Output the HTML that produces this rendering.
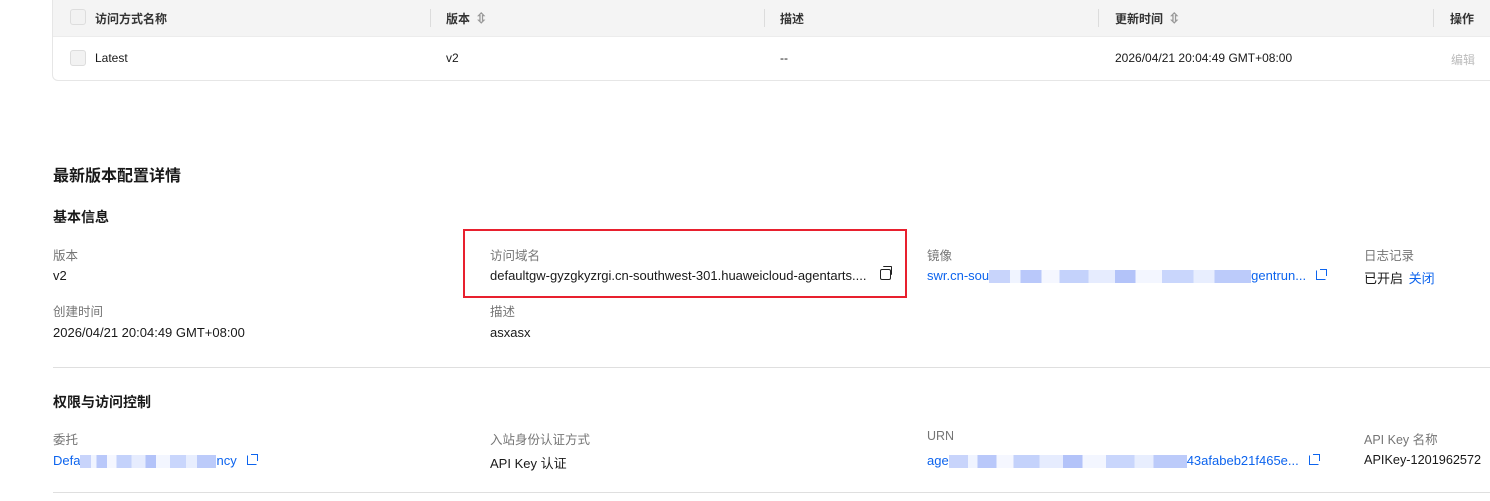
<!DOCTYPE html>
<html><head><meta charset="utf-8"><style>
body{margin:0;width:1490px;height:501px;background:#fff;font-family:"Liberation Sans","Noto Sans CJK SC",sans-serif;font-size:13px;color:#191919;position:relative;overflow:hidden}
.a{position:absolute;white-space:nowrap}
.lbl{color:#757575;font-size:12.5px}
.link{color:#0d64ee}
.cb{position:absolute;width:14px;height:14px;border:1px solid #ddd;border-radius:3px;background:#f2f2f2}
.sep{position:absolute;width:1px;height:18px;background:#dcdcdc;top:9px}
.blur{display:inline-block;height:13px;vertical-align:middle;background:linear-gradient(90deg,#c8d4fb 0 8%,#f0f4ff 8% 12%,#b9c8fa 12% 20%,#f5f7ff 20% 27%,#c4d2fb 27% 38%,#e6ecfe 38% 48%,#b3c3f9 48% 56%,#f3f6ff 56% 66%,#c9d6fc 66% 78%,#e8eefe 78% 86%,#bccbfa 86%)}
.ext{display:inline-block;width:8px;height:8px;border:1.3px solid #0d64ee;border-top-color:transparent;border-right-color:transparent;margin-left:10px;vertical-align:0px;position:relative}
.ext:after{content:"";position:absolute;right:-2px;top:-2px;width:6px;height:6px;border-top:1.3px solid #0d64ee;border-right:1.3px solid #0d64ee}
.sort{display:inline-block;color:#999;font-size:14px;margin-left:2px}
.t{font-size:12px;top:51px}
</style></head><body>
<div class="a" style="left:52px;top:-8px;width:1460px;height:87px;border:1px solid #e6e6e6;border-radius:6px"></div>
<div class="a" style="left:53px;top:0;width:1440px;height:36px;background:#f4f4f4;border-bottom:1px solid #ececec"></div>
<div class="cb" style="left:70px;top:9px"></div>
<div class="a" style="left:95px;top:10px;font-weight:bold;color:#333;font-size:12px">访问方式名称</div>
<div class="sep" style="left:430px"></div>
<div class="a" style="left:446px;top:10px;font-weight:bold;color:#333;font-size:12px">版本 <span class="sort">⇳</span></div>
<div class="sep" style="left:764px"></div>
<div class="a" style="left:780px;top:10px;font-weight:bold;color:#333;font-size:12px">描述</div>
<div class="sep" style="left:1098px"></div>
<div class="a" style="left:1115px;top:10px;font-weight:bold;color:#333;font-size:12px">更新时间 <span class="sort">⇳</span></div>
<div class="sep" style="left:1433px"></div>
<div class="a" style="left:1450px;top:10px;font-weight:bold;color:#333;font-size:12px">操作</div>
<div class="cb" style="left:70px;top:50px"></div>
<div class="a t" style="left:95px">Latest</div>
<div class="a t" style="left:446px">v2</div>
<div class="a t" style="left:780px">--</div>
<div class="a t" style="left:1115px">2026/04/21 20:04:49 GMT+08:00</div>
<div class="a t" style="left:1451px;color:#bbb">编辑</div>

<div class="a" style="left:53px;top:162px;font-size:16px;font-weight:bold">最新版本配置详情</div>
<div class="a" style="left:53px;top:207px;font-size:14px;font-weight:bold">基本信息</div>

<div class="a lbl" style="left:53px;top:245px">版本</div>
<div class="a" style="left:53px;top:268px">v2</div>
<div class="a lbl" style="left:53px;top:301px">创建时间</div>
<div class="a" style="left:53px;top:325px">2026/04/21 20:04:49 GMT+08:00</div>

<div class="a" style="left:463px;top:229px;width:440px;height:65px;border:2px solid #e8202e"></div>
<div class="a lbl" style="left:490px;top:245px">访问域名</div>
<div class="a" style="left:490px;top:268px">defaultgw-gyzgkyzrgi.cn-southwest-301.huaweicloud-agentarts....</div>
<div class="a" style="left:880px;top:269px;width:9px;height:9px;border:1.4px solid #222;border-radius:2px;background:#fff"></div>
<div class="a" style="left:883px;top:266px;width:8px;height:8px;border-top:1.4px solid #222;border-right:1.4px solid #222;border-radius:1px"></div>
<div class="a lbl" style="left:490px;top:301px">描述</div>
<div class="a" style="left:490px;top:325px">asxasx</div>

<div class="a lbl" style="left:927px;top:245px">镜像</div>
<div class="a link" style="left:927px;top:268px">swr.cn-sou<span class="blur" style="width:262px"></span>gentrun...<span class="ext"></span></div>
<div class="a lbl" style="left:1364px;top:245px">日志记录</div>
<div class="a" style="left:1364px;top:268px">已开启 <span class="link" style="margin-left:2px">关闭</span></div>

<div class="a" style="left:53px;top:367px;width:1440px;height:1px;background:#dfdfdf"></div>
<div class="a" style="left:53px;top:392px;font-size:14px;font-weight:bold">权限与访问控制</div>

<div class="a lbl" style="left:53px;top:429px">委托</div>
<div class="a link" style="left:53px;top:453px">Defa<span class="blur" style="width:136px"></span>ncy<span class="ext"></span></div>
<div class="a lbl" style="left:490px;top:429px">入站身份认证方式</div>
<div class="a" style="left:490px;top:453px">API Key 认证</div>
<div class="a lbl" style="left:927px;top:429px">URN</div>
<div class="a link" style="left:927px;top:453px">age<span class="blur" style="width:238px"></span>43afabeb21f465e...<span class="ext"></span></div>
<div class="a lbl" style="left:1364px;top:429px">API Key 名称</div>
<div class="a" style="left:1364px;top:453px;font-size:12.7px">APIKey-1201962572</div>

<div class="a" style="left:53px;top:492px;width:1440px;height:1px;background:#dfdfdf"></div>
</body></html>
